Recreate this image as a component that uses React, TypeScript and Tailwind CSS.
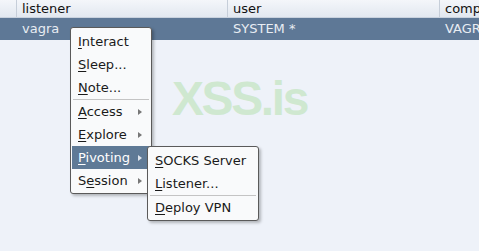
import React from 'react';

type Item = { label: string; key: number; sub?: boolean; active?: boolean } | 'sep';

const mainItems: Item[] = [
  { label: 'Interact', key: 0 },
  { label: 'Sleep...', key: 0 },
  { label: 'Note...', key: 0 },
  'sep',
  { label: 'Access', key: 0, sub: true },
  { label: 'Explore', key: 0, sub: true },
  { label: 'Pivoting', key: 0, sub: true, active: true },
  { label: 'Session', key: 1, sub: true },
];

const pivotItems: Item[] = [
  { label: 'SOCKS Server', key: 0 },
  { label: 'Listener...', key: 0 },
  'sep',
  { label: 'Deploy VPN', key: 0 },
];

const Label = ({ text, k }: { text: string; k: number }) => (
  <span>
    {text.slice(0, k)}
    <u className="underline-offset-2">{text[k]}</u>
    {text.slice(k + 1)}
  </span>
);

const Arrow = ({ active }: { active?: boolean }) => (
  <span
    className={`ml-auto w-0 h-0 border-y-[3px] border-y-transparent border-l-[4px] ${active ? 'border-l-[#e0e6ee]' : 'border-l-[#777]'}`}
  />
);

const Menu = ({ items, className }: { items: Item[]; className: string }) => (
  <div className={`absolute flex flex-col pt-[2px] pb-px bg-[#f9fafb] border border-[#5a5a5a] rounded-[3px] shadow-[2px_2px_3px_rgba(0,0,0,0.25)] ${className}`}>
    {items.map((it, i) =>
      it === 'sep' ? (
        <div key={i} className="mx-[2px] h-px bg-[#c4c4c4]" />
      ) : (
        <div
          key={i}
          className={`flex items-center h-[23px] mx-[1px] pl-[6px] pr-[8px] ${it.active ? 'bg-[#5f7a96] text-white' : 'text-[#1a1a1a]'}`}
        >
          <Label text={it.label} k={it.key} />
          {it.sub && <Arrow active={it.active} />}
        </div>
      )
    )}
  </div>
);

export default function App() {
  return (
    <div className="relative w-[479px] h-[251px] overflow-hidden bg-[#eef2f9] text-[13px] font-['DejaVu_Sans',sans-serif]">
      <div className="flex h-[18px] bg-gradient-to-b from-[#f4f6fa] to-[#e2e8f0] border-b border-[#c9d2de] text-[#111] leading-[17px]">
        <div className="w-[17px] border-r border-[#c6ced9]" />
        <div className="w-[211px] pl-[5px] border-r border-[#c6ced9]">listener</div>
        <div className="w-[212px] pl-[5px] border-r border-[#c6ced9]">user</div>
        <div className="flex-1 pl-[5px] whitespace-nowrap overflow-hidden">computer</div>
      </div>
      <div className="flex h-[22px] items-center bg-[#5e7896] text-[#e8edf3]">
        <div className="w-[17px]" />
        <div className="w-[211px] pl-[5px]">vagra</div>
        <div className="w-[212px] pl-[5px]">SYSTEM *</div>
        <div className="flex-1 pl-[5px] whitespace-nowrap overflow-hidden">VAGRANT</div>
      </div>
      <div className="flex pt-[35px] pl-[172px]">
        <span className="font-['Liberation_Sans',sans-serif] font-bold text-[48px] leading-none text-[#cfe8d0] tracking-[-2.4px]">XSS.is</span>
      </div>
      <Menu items={mainItems} className="left-[70px] top-[27px] w-[82px]" />
      <Menu items={pivotItems} className="left-[147px] top-[146px] w-[112px]" />
    </div>
  );
}
